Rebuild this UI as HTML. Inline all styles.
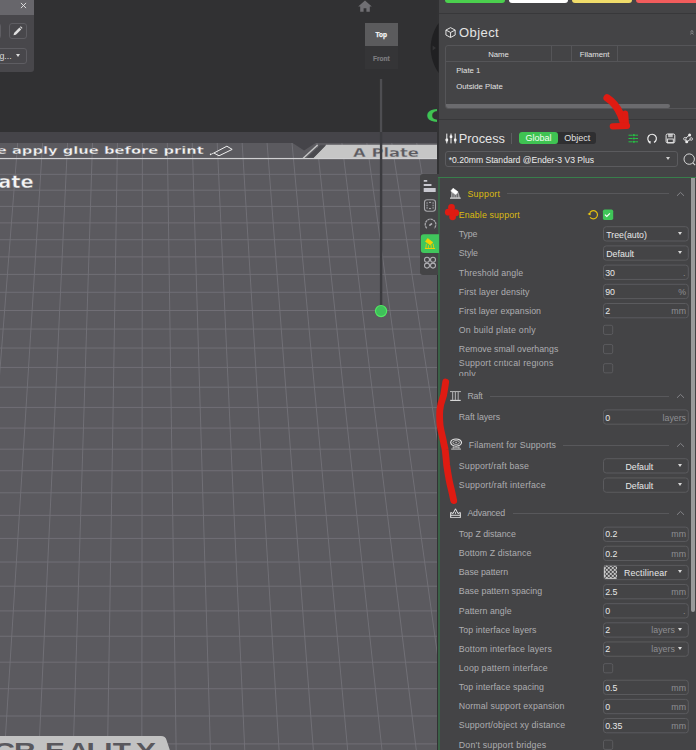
<!DOCTYPE html>
<html lang="en"><head><meta charset="utf-8"><title>Process - Support</title>
<style>
html,body{margin:0;padding:0}
body{width:696px;height:750px;overflow:hidden;position:relative;background:#313133;font-family:"Liberation Sans",sans-serif;font-size:8.8px;color:#adadb0}
.view{position:absolute;left:0;top:0}
.abs{position:absolute}
.lbl{position:absolute;left:458.8px;height:12px;line-height:12px;font-size:8.8px;white-space:nowrap;color:#adadb0}
.clip2{overflow:hidden}
.val{position:absolute;height:12px;line-height:12px;font-size:8.8px;white-space:nowrap;color:#e8e8e8}
.unit{position:absolute;height:12px;line-height:12px;font-size:8.8px;white-space:nowrap;color:#8e8e92}
.box{position:absolute;left:603px;width:85.8px;height:15.3px;box-sizing:border-box;border:1px solid #5b5b5e;border-radius:3px}
.chk{position:absolute;left:603px;width:10.2px;height:10.2px;box-sizing:border-box;border:1px solid #5b5b5e;border-radius:1.8px}
.chk.on{background:#3fc352;border-color:#3fc352}
.tri{position:absolute;width:0;height:0;border-left:2.4px solid transparent;border-right:2.4px solid transparent;border-top:3.6px solid #d8d8d8}
.hline{position:absolute;height:1px;background:#58585b}
.chev{position:absolute}
#panel{position:absolute;left:438.6px;top:0;width:257.4px;height:750px;background:#444446}
#strip{position:absolute;left:437px;top:0;width:1.6px;height:750px;background:#323234}
.sep{position:absolute;left:438.6px;width:257.4px;height:1px;background:#38383a}
.btn{position:absolute;top:-4px;height:7px;width:59.3px;border-radius:3px}
.h1{position:absolute;color:#e4e4e4;white-space:nowrap;line-height:16px;height:16px}
.tb{position:absolute;font-size:7.75px;color:#e2e2e2;white-space:nowrap;line-height:10px;height:10px}
</style></head><body>
<svg class="view" width="438" height="750" viewBox="0 0 438 750">
<rect x="0" y="0" width="438" height="750" fill="#313133"/>
<rect x="0" y="132" width="437" height="11.5" fill="#454449"/>
<rect x="0" y="143" width="437" height="607" fill="#5b5a5f"/>
<path d="M-32.20 143L-98.31 750M-7.26 143L-64.00 750M17.68 143L-29.70 750M42.62 143L4.61 750M67.56 143L38.91 750M92.50 143L73.22 750M117.44 143L107.53 750M142.38 143L141.83 750M167.32 143L176.14 750M192.26 143L210.44 750M217.21 143L244.75 750M242.15 143L279.05 750M267.09 143L313.36 750M292.03 143L347.67 750M316.97 143L381.97 750M341.91 143L416.28 750M366.85 143L450.58 750M391.79 143L484.89 750M416.73 143L519.19 750M441.67 143L553.50 750M466.61 143L587.81 750M0 174.31H437M0 190.19H437M0 206.39H437M0 222.89H437M0 239.72H437M0 256.89H437M0 274.39H437M0 292.25H437M0 310.47H437M0 329.06H437M0 348.04H437M0 367.42H437M0 387.21H437M0 407.42H437M0 428.07H437M0 449.18H437M0 470.75H437M0 492.80H437M0 515.35H437M0 538.42H437M0 562.03H437M0 586.19H437M0 610.92H437M0 636.24H437M0 662.18H437M0 688.76H437M0 716.00H437M0 743.92H437" stroke="#737278" stroke-width="0.9" fill="none"/>
<path d="M292.6 143H315.6L304.1 150.5Z" fill="#454449"/>
<path d="M326 144.7H437V158.8H312.6Z" fill="#c6c6c6"/>
<path d="M303.2 158.3L317.6 144.9" stroke="#c6c6c6" stroke-width="1.4" fill="none"/>
<path d="M306 158.8L320 145.2H326L312.6 158.8Z" fill="#4a4a4e"/>
<rect x="0" y="157.95" width="437" height="1.2" fill="#cfcfd1"/>
<text transform="translate(-3.2,154.2) scale(1.34,1)" font-family="'DejaVu Sans',sans-serif" font-weight="bold" font-size="11" fill="#f4f4f4" stroke="#5b5a5f" stroke-width="0.3">e apply glue before print</text>
<text transform="translate(-1.8,187.9) scale(1.13,1)" font-family="'DejaVu Sans',sans-serif" font-weight="bold" font-size="17.2" fill="#f4f4f4" stroke="#5b5a5f" stroke-width="0.45">ate</text>
<text transform="translate(353,156.8) scale(1.3,1)" font-family="'DejaVu Sans',sans-serif" font-weight="bold" font-size="12.6" fill="#5b5a5f" stroke="#c6c6c6" stroke-width="0.3">A Plate</text>
<path d="M213.9 153L226.9 146.2L232.2 149.4L219 155.8Z" stroke="#f0f0f0" stroke-width="1" fill="none" stroke-linejoin="round"/><circle cx="210.6" cy="154.4" r="0.8" fill="#f0f0f0"/><path d="M213.9 153L211.3 154.1" stroke="#f0f0f0" stroke-width="0.8"/>
<rect x="379.9" y="79" width="2.3" height="53" fill="#4e4e52"/>
<rect x="379.9" y="132" width="2.4" height="174.5" fill="#3c3c40"/>
<circle cx="381.05" cy="311.05" r="5.6" fill="#3fc05a" stroke="#52ea62" stroke-width="1.1"/>
<path d="M0 736H161Q165.5 736 166.5 740L169.8 750H0Z" fill="#c2c2c2"/>
<text transform="scale(1.35,1)" x="-4.9 10.4 33.4 50.1 64.1 77.3 83.6 100.8" y="757.6" font-family="'Liberation Sans',sans-serif" font-weight="bold" font-size="22" fill="#59585d">CREALITY</text>
</svg>
<!-- floating panel top-left -->
<div class="abs" style="left:0;top:0;width:33.7px;height:72px;background:#48474b;border-radius:0 0 3px 0;overflow:hidden">
 <div class="abs" style="left:0;top:0;width:34px;height:14.8px;background:#67666b"></div>
 <svg class="abs" style="left:20.2px;top:1.8px" width="7" height="7" viewBox="0 0 7 7"><path d="M0.9 0.9L6.1 6.1M6.1 0.9L0.9 6.1" stroke="#e6e6e6" stroke-width="0.9"/></svg>
 <div class="abs" style="left:-10px;top:23px;width:10.5px;height:16px;box-sizing:border-box;border:1px solid #5e5d62;border-radius:3px"></div>
 <div class="abs" style="left:8.6px;top:23px;width:18.3px;height:16px;box-sizing:border-box;border:1px solid #5e5d62;border-radius:3px"></div>
 <svg class="abs" style="left:13.2px;top:26.2px" width="10" height="10" viewBox="0 0 10 10"><path d="M0.5 9.3L1.1 6.9L6.4 1.6L8.2 3.4L2.9 8.7Z" fill="#e0e0e0"/><path d="M7 1L7.8 0.3L9.5 2L8.8 2.8Z" fill="#e0e0e0"/></svg>
 <div class="abs" style="left:-20px;top:47.5px;width:46.9px;height:16px;box-sizing:border-box;border:1px solid #5e5d62;border-radius:3px"></div>
 <div class="abs" style="left:-0.6px;top:49.5px;font-size:8.8px;line-height:12px;color:#dcdcdc;white-space:nowrap">g...</div>
 <div class="tri" style="left:16px;top:53.6px;border-top-color:#dcdcdc"></div>
</div>
<!-- view cube -->
<svg class="abs" style="left:358.4px;top:0.4px" width="14" height="12" viewBox="0 0 14 12"><path d="M7 0.4L0.2 6.6H2.2V11.8H5.6V8.2H8.4V11.8H11.8V6.6H13.8Z" fill="#706f73"/></svg>
<div class="abs" style="left:364.7px;top:23px;width:33.2px;height:23px;background:#5b5b5d"></div>
<div class="abs" style="left:364.7px;top:46px;width:33.2px;height:23.4px;background:#353537"></div>
<div class="abs" style="left:364.7px;top:29.5px;width:33.2px;text-align:center;font-size:6.5px;line-height:10px;font-weight:bold;color:#f6f6f6;-webkit-text-stroke:0.25px #f6f6f6">Top</div>
<div class="abs" style="left:364.7px;top:53.5px;width:33.2px;text-align:center;font-size:6.5px;line-height:10px;font-weight:bold;color:#7d7d80;-webkit-text-stroke:0.2px #7d7d80">Front</div>
<!-- collapse handle -->
<!-- green C -->
<div class="abs" style="left:426px;top:100px;width:11.5px;height:30px;overflow:hidden"><div class="abs" style="left:0px;top:4.3px;font-family:'Liberation Sans',sans-serif;font-weight:bold;font-size:18.8px;line-height:24px;color:#3fc352;transform:scaleX(1.75);transform-origin:0 0">C</div></div>
<div id="strip"></div>
<svg class="abs" style="left:430px;top:22px" width="9" height="52" viewBox="0 0 9 52"><path d="M8.6 1C-2 17 -2 35 8.6 51Z" fill="#202022"/><path d="M2.6 23.6L6 26L2.6 28.4Z" fill="#343436"/></svg>
<!-- toolbar -->
<div class="abs" style="left:420.1px;top:174.2px;width:18.6px;height:100.6px;background:#444446;border-radius:3px 0 0 3px"></div>
<svg class="abs" style="left:420.1px;top:174.2px" width="18.9" height="101" viewBox="0 0 18.5 101">
 <rect x="3.5" y="6.1" width="3.6" height="1.6" rx="0.5" fill="#c9c9d0"/><rect x="3.5" y="9.9" width="7.8" height="2.1" rx="0.5" fill="#c9c9d0"/><rect x="3.5" y="14" width="12" height="3.9" rx="0.5" fill="#c9c9d0"/>
 <rect x="4.3" y="25.7" width="11" height="11.5" rx="2.6" stroke="#a6a6aa" stroke-width="1.1" fill="none"/>
 <g fill="#7c7c80"><rect x="6" y="28.2" width="1.8" height="1.6"/><rect x="6" y="30.7" width="1.8" height="1.6"/><rect x="6" y="33.1" width="1.8" height="1.6"/><rect x="12.1" y="28.2" width="1.8" height="1.6"/><rect x="12.1" y="30.7" width="1.8" height="1.6"/><rect x="12.1" y="33.1" width="1.8" height="1.6"/></g>
 <path d="M8.8 28.4H10.9M8.8 34.6H10.9" stroke="#d8d8dc" stroke-width="0.7"/>
 <path d="M6.6 54.2A5.3 5.3 0 1 1 14.1 54.2" stroke="#a6a6aa" stroke-width="1.3" fill="none" stroke-dasharray="2.4 0.6"/><path d="M9.7 51.1L11.3 49.9" stroke="#b4b4b8" stroke-width="1.7" stroke-linecap="round"/>
 <circle cx="6.8" cy="85.8" r="2.5" stroke="#b0b0b4" stroke-width="1.1" fill="none"/><circle cx="12.8" cy="85.8" r="2.5" stroke="#b0b0b4" stroke-width="1.1" fill="none"/><circle cx="6.8" cy="91.6" r="2.5" stroke="#b0b0b4" stroke-width="1.1" fill="none"/><circle cx="12.8" cy="91.6" r="2.5" stroke="#b0b0b4" stroke-width="1.1" fill="none"/>
</svg>
<!-- right panel -->
<div id="panel"></div>
<div class="btn" style="left:445.3px;background:#4bd04e"></div>
<div class="btn" style="left:508.8px;background:#ffffff"></div>
<div class="btn" style="left:572.4px;background:#f0dc6a"></div>
<div class="btn" style="left:636px;background:#f25c5c;width:62px"></div>
<div class="sep" style="top:12.9px"></div>
<svg class="abs" style="left:444.8px;top:26.7px" width="11.1" height="11.1" viewBox="0 0 12 12"><path d="M6 0.7L11 3.3V8.7L6 11.3L1 8.7V3.3Z" stroke="#f0f0f0" stroke-width="1" fill="none" stroke-linejoin="round"/><path d="M1 3.3L6 5.9L11 3.3M6 5.9V11.3" stroke="#f0f0f0" stroke-width="1" fill="none"/></svg>
<div class="h1" style="left:459px;top:24.9px;font-size:13px;letter-spacing:0.42px">Object</div>
<svg class="abs" style="left:689.9px;top:29.9px" width="3.9" height="4.7" viewBox="0 0 5 6"><path d="M0.5 2.6L2.5 0.7L4.5 2.6M0.5 5.4L2.5 3.5L4.5 5.4" stroke="#c8c8c8" stroke-width="0.8" fill="none"/></svg>
<!-- table -->
<div class="abs" style="left:445.3px;top:45.4px;width:260px;height:63.3px;box-sizing:border-box;border:1px solid #555558;border-radius:3px"></div>
<div class="abs" style="left:446px;top:60.6px;width:250px;height:1px;background:#555558"></div>
<div class="abs" style="left:550.8px;top:46px;width:1px;height:15px;background:#555558"></div>
<div class="abs" style="left:571.2px;top:46px;width:1px;height:15px;background:#555558"></div>
<div class="abs" style="left:617.1px;top:46px;width:1px;height:15px;background:#555558"></div>
<div class="tb" style="left:446px;width:105px;text-align:center;top:49.7px">Name</div>
<div class="tb" style="left:571.6px;width:46px;text-align:center;top:49.7px">Filament</div>
<div class="tb" style="left:456.2px;top:65.7px">Plate 1</div>
<div class="tb" style="left:456.2px;top:81.6px">Outside Plate</div>
<div class="abs" style="left:446px;top:104.1px;width:223.8px;height:4.2px;background:#6b6b6e;border-radius:0 2px 2px 2px"></div>
<div class="sep" style="top:118.8px"></div>
<!-- process header -->
<svg class="abs" style="left:444.6px;top:133px" width="12" height="11" viewBox="0 0 12 11"><path d="M1.8 0.6V10.4M6 0.6V10.4M10.2 0.6V10.4" stroke="#f0f0f0" stroke-width="1"/><rect x="0.5" y="5.5" width="2.6" height="2.9" rx="0.9" fill="#f4f4f4"/><rect x="4.7" y="2.2" width="2.6" height="2.9" rx="0.9" fill="#f4f4f4"/><rect x="8.9" y="5.5" width="2.6" height="2.9" rx="0.9" fill="#f4f4f4"/></svg>
<div class="h1" style="left:458.8px;top:130.6px;font-size:12.8px">Process</div>
<div class="abs" style="left:511.2px;top:133px;width:1px;height:10.6px;background:#5c5c5f"></div>
<div class="abs" style="left:518.8px;top:132.3px;width:77.6px;height:12.2px;border-radius:3px;background:#2f2f31"></div>
<div class="abs" style="left:518.8px;top:132.3px;width:39.2px;height:12.2px;border-radius:3px;background:#3fc352"></div>
<div class="abs" style="left:518.8px;top:132.4px;width:39.2px;text-align:center;font-size:9px;line-height:12px;color:#f2fff2">Global</div>
<div class="abs" style="left:558px;top:132.4px;width:38.4px;text-align:center;font-size:9px;line-height:12px;color:#e0e0e0">Object</div>
<svg class="abs" style="left:628px;top:132.6px" width="11" height="11" viewBox="0 0 11 11"><path d="M0.5 2.2H4.6M7.2 2.2H10M0.5 5.5H4.6M7.2 5.5H10M0.5 8.8H4.6M7.2 8.8H10" stroke="#25c244" stroke-width="1"/><circle cx="5.9" cy="2.2" r="1.1" fill="#25c244"/><circle cx="5.9" cy="5.5" r="1.1" fill="#25c244"/><circle cx="5.9" cy="8.8" r="1.1" fill="#25c244"/></svg>
<svg class="abs" style="left:646px;top:132.6px" width="12" height="12" viewBox="0 0 12 12"><path d="M4 9.3A4.3 4.3 0 1 1 8 9.4" stroke="#ececec" stroke-width="1.2" fill="none"/><path d="M1.6 8.6L4.8 8.3L4.3 11Z" fill="#ececec"/></svg>
<svg class="abs" style="left:664.6px;top:132.6px" width="11" height="11" viewBox="0 0 11 11"><rect x="1.1" y="1" width="8.7" height="8.8" rx="1.4" stroke="#ececec" stroke-width="1" fill="none"/><rect x="3.1" y="1" width="4.6" height="3.2" fill="#ececec" opacity="0.7"/><rect x="2.6" y="6" width="5.7" height="3.8" stroke="#ececec" stroke-width="0.9" fill="none"/></svg>
<svg class="abs" style="left:683.4px;top:132.6px" width="12" height="11" viewBox="0 0 12 11"><path d="M6.6 2L1.9 5.8L3.7 8.8L8 6" stroke="#ececec" stroke-width="0.9" fill="none"/><circle cx="6.6" cy="2" r="1.5" fill="#ececec"/><circle cx="3.7" cy="8.8" r="1.5" fill="#ececec"/><circle cx="1.9" cy="5.8" r="1.3" stroke="#ececec" stroke-width="0.8" fill="#444446"/><circle cx="8.2" cy="6" r="1.3" stroke="#ececec" stroke-width="0.8" fill="#444446"/></svg>
<!-- combo -->
<div class="abs" style="left:445.3px;top:151.3px;width:232.3px;height:15.4px;box-sizing:border-box;border:1px solid #5b5b5e;border-radius:3px"></div>
<div class="val" style="left:448.7px;top:154px;font-size:8.6px;color:#ececec">*0.20mm Standard @Ender-3 V3 Plus</div>
<div class="tri" style="left:666.2px;top:157.2px;border-top-color:#cfcfcf"></div>
<svg class="abs" style="left:683px;top:153.4px" width="13" height="13" viewBox="0 0 13 13"><circle cx="6.2" cy="6.1" r="5.2" stroke="#d8d8d8" stroke-width="1" fill="none"/><path d="M9.9 9.8L12.2 12.1" stroke="#d8d8d8" stroke-width="1.1"/></svg>
<!-- scroll area border -->
<div class="abs" style="left:438.1px;top:176.9px;width:1.8px;height:574px;background:#3a6146"></div>
<svg class="abs" style="left:420.1px;top:234px" width="19.2" height="19.2" viewBox="0 0 19.2 19.2"><path d="M3.8 0.3H19V18.9H3.8A3 3 0 0 1 0.8 15.9V3.3A3 3 0 0 1 3.8 0.3Z" fill="#40c75c"/><path d="M7.7 4.6L12.9 8.5L10.3 11L5.5 7.5Z" fill="#f8cf00" stroke="#f8cf00" stroke-width="0.7" stroke-linejoin="round"/><path d="M6.4 9.8L5.8 14.2M8.4 11.2V14.2M11.2 11.2V14.2M13.2 9.9L13.8 14.2" stroke="#f8cf00" stroke-width="0.8"/><path d="M4.9 14.5H15.1" stroke="#f8cf00" stroke-width="1"/></svg>
<svg class="abs" style="left:438px;top:176px" width="258" height="3" viewBox="0 0 258 3"><rect x="0.1" y="1" width="258" height="0.95" fill="#38824c"/></svg>
<div class="abs" style="left:691.4px;top:178.4px;width:3.9px;height:433.6px;background:#9a9a9b;border-radius:0 0 2.2px 2.2px"></div>
<div class="lbl" style="top:187.55px;left:467.4px;color:#dcbb10;letter-spacing:0.299px;">Support</div>
<div class="hline" style="top:193.20px;left:507px;width:162.29999999999995px"></div>
<svg class="chev" style="top:190.70px;left:675.5px" width="9" height="6" viewBox="0 0 9 6"><path d="M1 4.8L4.5 1.4L8 4.8" stroke="#8a8a8e" stroke-width="0.9" fill="none"/></svg>
<svg style="position:absolute;left:450.2px;top:188.4px" width="11" height="11" viewBox="0 0 11 11"><path d="M1.3 4L1 9.7H10L8.7 4.4Z" fill="#ffffff" opacity="0.5"/><path d="M3 5.6V9.6M5.2 6.6V9.6M7.3 5.8V9.6" stroke="#444446" stroke-width="0.7"/><path d="M3.1 0.3L8 3.8L5.9 6.4L0.8 3.1Z" fill="#ffffff" stroke="#ffffff" stroke-width="0.6" stroke-linejoin="round"/><path d="M0 10.1H10.7" stroke="#ffffff" stroke-width="1"/></svg>
<div class="lbl" style="top:209.05px;color:#dcbb10;letter-spacing:0.132px;">Enable support</div>
<svg style="position:absolute;left:587px;top:209px" width="12" height="11" viewBox="0 0 12 11"><path d="M3.2 3.2A4.1 4.1 0 1 1 3.4 8.6" stroke="#e0bd12" stroke-width="1.25" fill="none" stroke-linecap="round"/><path d="M0.5 4.9L3.7 3.3L3.5 6.6Z" fill="#f0cc10"/></svg>
<svg style="position:absolute;left:602px;top:209px" width="12" height="12" viewBox="0 0 12 12"><rect x="0.9" y="0.5" width="10.3" height="10.4" rx="1.7" fill="#3fc558"/><path d="M2.9 5.6L4.8 7.4L7.9 4.3" stroke="#fff" stroke-width="1.15" fill="none"/></svg>
<div class="lbl" style="top:228.10px;color:#adadb0;letter-spacing:-0.125px;">Type</div>
<div class="val" style="top:228.60px;left:606.2px;">Tree(auto)</div>
<div class="tri" style="top:231.65px;left:677.5px;border-top-color:#d8d8d8"></div>
<div class="lbl" style="top:247.30px;color:#adadb0;letter-spacing:-0.09px;">Style</div>
<div class="val" style="top:247.80px;left:606.2px;">Default</div>
<div class="tri" style="top:250.85px;left:677.5px;border-top-color:#d8d8d8"></div>
<div class="lbl" style="top:266.50px;color:#adadb0;letter-spacing:0.094px;">Threshold angle</div>
<div class="val" style="top:267.00px;left:605.2px;">30</div>
<div class="unit" style="top:267.00px;right:10.5px">.</div>
<div class="lbl" style="top:285.70px;color:#adadb0;letter-spacing:0.093px;">First layer density</div>
<div class="val" style="top:286.20px;left:605.2px;">90</div>
<div class="unit" style="top:286.20px;right:10px">%</div>
<div class="lbl" style="top:304.90px;color:#adadb0;letter-spacing:0.052px;">First layer expansion</div>
<div class="val" style="top:305.40px;left:605.2px;">2</div>
<div class="unit" style="top:305.40px;right:10px">mm</div>
<div class="lbl" style="top:324.10px;color:#adadb0;letter-spacing:0.218px;">On build plate only</div>
<div class="lbl" style="top:343.30px;color:#adadb0;letter-spacing:0.011px;">Remove small overhangs</div>
<div class="lbl clip2" style="top:359.6px;height:16.2px;letter-spacing:0.22px"><div style="margin-top:-1.6px;line-height:11.3px">Support critical regions<br>only</div></div>
<div class="lbl" style="top:389.85px;left:467.4px;color:#adadb0;letter-spacing:-0.244px;">Raft</div>
<div class="hline" style="top:395.50px;left:490.2px;width:179.09999999999997px"></div>
<svg class="chev" style="top:393.00px;left:675.5px" width="9" height="6" viewBox="0 0 9 6"><path d="M1 4.8L4.5 1.4L8 4.8" stroke="#8a8a8e" stroke-width="0.9" fill="none"/></svg>
<svg style="position:absolute;left:450.2px;top:391px" width="11" height="10.6" viewBox="0 0 11 10.6"><path d="M0 0.6H10.9" stroke="#d8d8d8" stroke-width="0.8"/><path d="M0.2 9.4H10.7" stroke="#e0e0e0" stroke-width="1.1"/><path d="M2.6 0.8V9M5.4 0.8V9M8.2 0.8V9" stroke="#a2a2a4" stroke-width="1.2"/></svg>
<div class="lbl" style="top:411.30px;color:#adadb0;letter-spacing:-0.074px;">Raft layers</div>
<div class="val" style="top:411.80px;left:605.2px;">0</div>
<div class="unit" style="top:411.80px;right:10px">layers</div>
<div class="lbl" style="top:438.85px;left:468.7px;color:#adadb0;letter-spacing:0.16px;">Filament for Supports</div>
<div class="hline" style="top:444.50px;left:563px;width:106.29999999999995px"></div>
<svg class="chev" style="top:442.00px;left:675.5px" width="9" height="6" viewBox="0 0 9 6"><path d="M1 4.8L4.5 1.4L8 4.8" stroke="#8a8a8e" stroke-width="0.9" fill="none"/></svg>
<svg style="position:absolute;left:449.8px;top:438.2px" width="12.4" height="12" viewBox="0 0 12.4 12"><ellipse cx="6.1" cy="4.6" rx="5.4" ry="3.6" stroke="#e8e8e8" stroke-width="1.1" fill="none"/><ellipse cx="6.1" cy="4.5" rx="3.3" ry="2" stroke="#d0d0d0" stroke-width="0.8" fill="none"/><circle cx="6.1" cy="4.5" r="0.7" fill="#d0d0d0"/><path d="M3.3 8.2V10.6M8.9 8.2V10.6M2.6 9.7H9.6" stroke="#bcbcbc" stroke-width="0.8"/><path d="M1.2 11.1H11" stroke="#d8d8d8" stroke-width="0.9"/></svg>
<div class="lbl" style="top:460.10px;color:#adadb0;letter-spacing:0.17px;">Support/raft base</div>
<div class="val" style="top:460.60px;left:625.4px;">Default</div>
<div class="tri" style="top:463.65px;left:677.5px;border-top-color:#d8d8d8"></div>
<div class="lbl" style="top:479.35px;color:#adadb0;letter-spacing:0.221px;">Support/raft interface</div>
<div class="val" style="top:479.85px;left:625.4px;">Default</div>
<div class="tri" style="top:482.90px;left:677.5px;border-top-color:#d8d8d8"></div>
<div class="lbl" style="top:507.15px;left:467.4px;color:#adadb0;letter-spacing:-0.204px;">Advanced</div>
<div class="hline" style="top:512.80px;left:512.6px;width:156.69999999999993px"></div>
<svg class="chev" style="top:510.30px;left:675.5px" width="9" height="6" viewBox="0 0 9 6"><path d="M1 4.8L4.5 1.4L8 4.8" stroke="#8a8a8e" stroke-width="0.9" fill="none"/></svg>
<svg style="position:absolute;left:450.2px;top:507.8px" width="11" height="10.6" viewBox="0 0 11 10.6"><path d="M0.7 4.5L3.1 5.5L5.5 0.8L7.9 5.5L10.3 4.5V9.8H0.7Z" stroke="#ececec" stroke-width="1" fill="none" stroke-linejoin="miter"/><path d="M0.7 7.3H10.3" stroke="#ececec" stroke-width="0.9"/><path d="M5.5 4.2V5.8" stroke="#ececec" stroke-width="0.9"/></svg>
<div class="lbl" style="top:528.00px;color:#adadb0;letter-spacing:-0.009px;">Top Z distance</div>
<div class="val" style="top:528.40px;left:605.2px;">0.2</div>
<div class="unit" style="top:528.40px;right:10px">mm</div>
<div class="lbl" style="top:547.14px;color:#adadb0;letter-spacing:0.1px;">Bottom Z distance</div>
<div class="val" style="top:547.54px;left:605.2px;">0.2</div>
<div class="unit" style="top:547.54px;right:10px">mm</div>
<div class="lbl" style="top:566.28px;color:#adadb0;letter-spacing:-0.053px;">Base pattern</div>
<div class="val" style="top:566.68px;left:623.9px;letter-spacing:0.18px">Rectilinear</div>
<div class="tri" style="top:570.33px;left:677.5px;border-top-color:#d8d8d8"></div>
<svg style="position:absolute;left:603.9px;top:565.43px" width="13.6" height="13.8" viewBox="0 0 13.6 13.8"><defs><pattern id="ck" x="0.8" y="0.9" width="4" height="4" patternUnits="userSpaceOnUse"><rect width="4" height="4" fill="#f2f2f2"/><path d="M0 -1.5L1.5 0L0 1.5L-1.5 0ZM4 -1.5L5.5 0L4 1.5L2.5 0ZM0 2.5L1.5 4L0 5.5L-1.5 4ZM4 2.5L5.5 4L4 5.5L2.5 4ZM2 0.5L3.5 2L2 3.5L0.5 2Z" fill="#303032"/></pattern></defs><rect x="0.1" y="0.1" width="13.4" height="13.6" rx="1.8" fill="#e4e4e4"/><rect x="0.8" y="0.9" width="12" height="12" fill="url(#ck)"/></svg>
<div class="lbl" style="top:585.42px;color:#adadb0;letter-spacing:0.034px;">Base pattern spacing</div>
<div class="val" style="top:585.82px;left:605.2px;">2.5</div>
<div class="unit" style="top:585.82px;right:10px">mm</div>
<div class="lbl" style="top:604.56px;color:#adadb0;letter-spacing:0.038px;">Pattern angle</div>
<div class="val" style="top:604.96px;left:605.2px;">0</div>
<div class="unit" style="top:604.96px;right:10.5px">.</div>
<div class="lbl" style="top:623.70px;color:#adadb0;letter-spacing:0.075px;">Top interface layers</div>
<div class="val" style="top:624.10px;left:605.2px;">2</div>
<div class="unit" style="top:624.10px;right:21.200000000000045px">layers</div>
<div class="tri" style="top:627.75px;left:677.5px;border-top-color:#d8d8d8"></div>
<div class="lbl" style="top:642.84px;color:#adadb0;letter-spacing:0.138px;">Bottom interface layers</div>
<div class="val" style="top:643.24px;left:605.2px;">2</div>
<div class="unit" style="top:643.24px;right:21.200000000000045px">layers</div>
<div class="tri" style="top:646.89px;left:677.5px;border-top-color:#d8d8d8"></div>
<div class="lbl" style="top:661.98px;color:#adadb0;letter-spacing:0.158px;">Loop pattern interface</div>
<div class="lbl" style="top:681.12px;color:#adadb0;letter-spacing:0.103px;">Top interface spacing</div>
<div class="val" style="top:681.52px;left:605.2px;">0.5</div>
<div class="unit" style="top:681.52px;right:10px">mm</div>
<div class="lbl" style="top:700.26px;color:#adadb0;letter-spacing:0.131px;">Normal support expansion</div>
<div class="val" style="top:700.66px;left:605.2px;">0</div>
<div class="unit" style="top:700.66px;right:10px">mm</div>
<div class="lbl" style="top:719.40px;color:#adadb0;letter-spacing:0.129px;">Support/object xy distance</div>
<div class="val" style="top:719.80px;left:605.2px;">0.35</div>
<div class="unit" style="top:719.80px;right:10px">mm</div>
<div class="lbl" style="top:738.54px;color:#adadb0;letter-spacing:0.203px;">Don't support bridges</div>
<svg class="abs" style="left:0;top:0" width="696" height="750" viewBox="0 0 696 750"><g fill="none" stroke="#5b5b5e" stroke-width="1"><rect x="603.5" y="226.70" width="84.8" height="14.3" rx="2.8"/><rect x="603.5" y="245.90" width="84.8" height="14.3" rx="2.8"/><rect x="603.5" y="265.10" width="84.8" height="14.3" rx="2.8"/><rect x="603.5" y="284.30" width="84.8" height="14.3" rx="2.8"/><rect x="603.5" y="303.50" width="84.8" height="14.3" rx="2.8"/><rect x="603.5" y="325.25" width="9.2" height="9.2" rx="1.6"/><rect x="603.5" y="344.45" width="9.2" height="9.2" rx="1.6"/><rect x="603.5" y="363.65" width="9.2" height="9.2" rx="1.6"/><rect x="603.5" y="409.90" width="84.8" height="14.3" rx="2.8"/><rect x="603.5" y="458.70" width="84.8" height="14.3" rx="2.8"/><rect x="603.5" y="477.95" width="84.8" height="14.3" rx="2.8"/><rect x="603.5" y="527.10" width="84.8" height="14.3" rx="2.8"/><rect x="603.5" y="546.24" width="84.8" height="14.3" rx="2.8"/><rect x="603.5" y="565.38" width="84.8" height="14.3" rx="2.8"/><rect x="603.5" y="584.52" width="84.8" height="14.3" rx="2.8"/><rect x="603.5" y="603.66" width="84.8" height="14.3" rx="2.8"/><rect x="603.5" y="622.80" width="84.8" height="14.3" rx="2.8"/><rect x="603.5" y="641.94" width="84.8" height="14.3" rx="2.8"/><rect x="603.5" y="663.63" width="9.2" height="9.2" rx="1.6"/><rect x="603.5" y="680.22" width="84.8" height="14.3" rx="2.8"/><rect x="603.5" y="699.36" width="84.8" height="14.3" rx="2.8"/><rect x="603.5" y="718.50" width="84.8" height="14.3" rx="2.8"/><rect x="603.5" y="740.19" width="9.2" height="9.2" rx="1.6"/></g></svg>
<!-- red annotations -->
<svg class="abs" style="left:0;top:0;pointer-events:none" width="696" height="750" viewBox="0 0 696 750">
 <g fill="none" stroke="#df1b12" stroke-linecap="round" stroke-linejoin="round">
  <path d="M607.1 97.9C612 101 617.5 107.5 620.6 114.5C622 118 623.2 121.5 624 124.6" stroke-width="7.4"/>
  <path d="M625.4 113.2L626.2 124" stroke-width="5.6"/>
  <path d="M612.8 126.4L627 125.9" stroke-width="6.2"/>
  <path d="M445.7 382C445 387 444.4 391 443.6 395.2C442.6 399 441.2 402 440.6 405.2C439.8 409 439.5 412 439.6 415.3C439.6 419 439.7 422 440.1 425.3C440.6 429 441.3 432 442.1 435.4C443 439 443.4 441 444.1 445C444.6 447 445 448 445.2 450.1C445.8 455 446.2 460 446.7 465.2C447.4 470 448.2 475 449.2 480.3C450.1 485 451.2 489 452.2 493.4L453.7 500.6" stroke-width="6.8"/>
 </g>
 <g fill="#df1b12"><circle cx="451.5" cy="207.5" r="3.4"/><circle cx="448.3" cy="212.2" r="3.4"/><circle cx="455.6" cy="212.7" r="3.5"/><circle cx="452.6" cy="216.8" r="3.4"/><circle cx="452" cy="212.3" r="3"/></g>
</svg>
</body></html>
